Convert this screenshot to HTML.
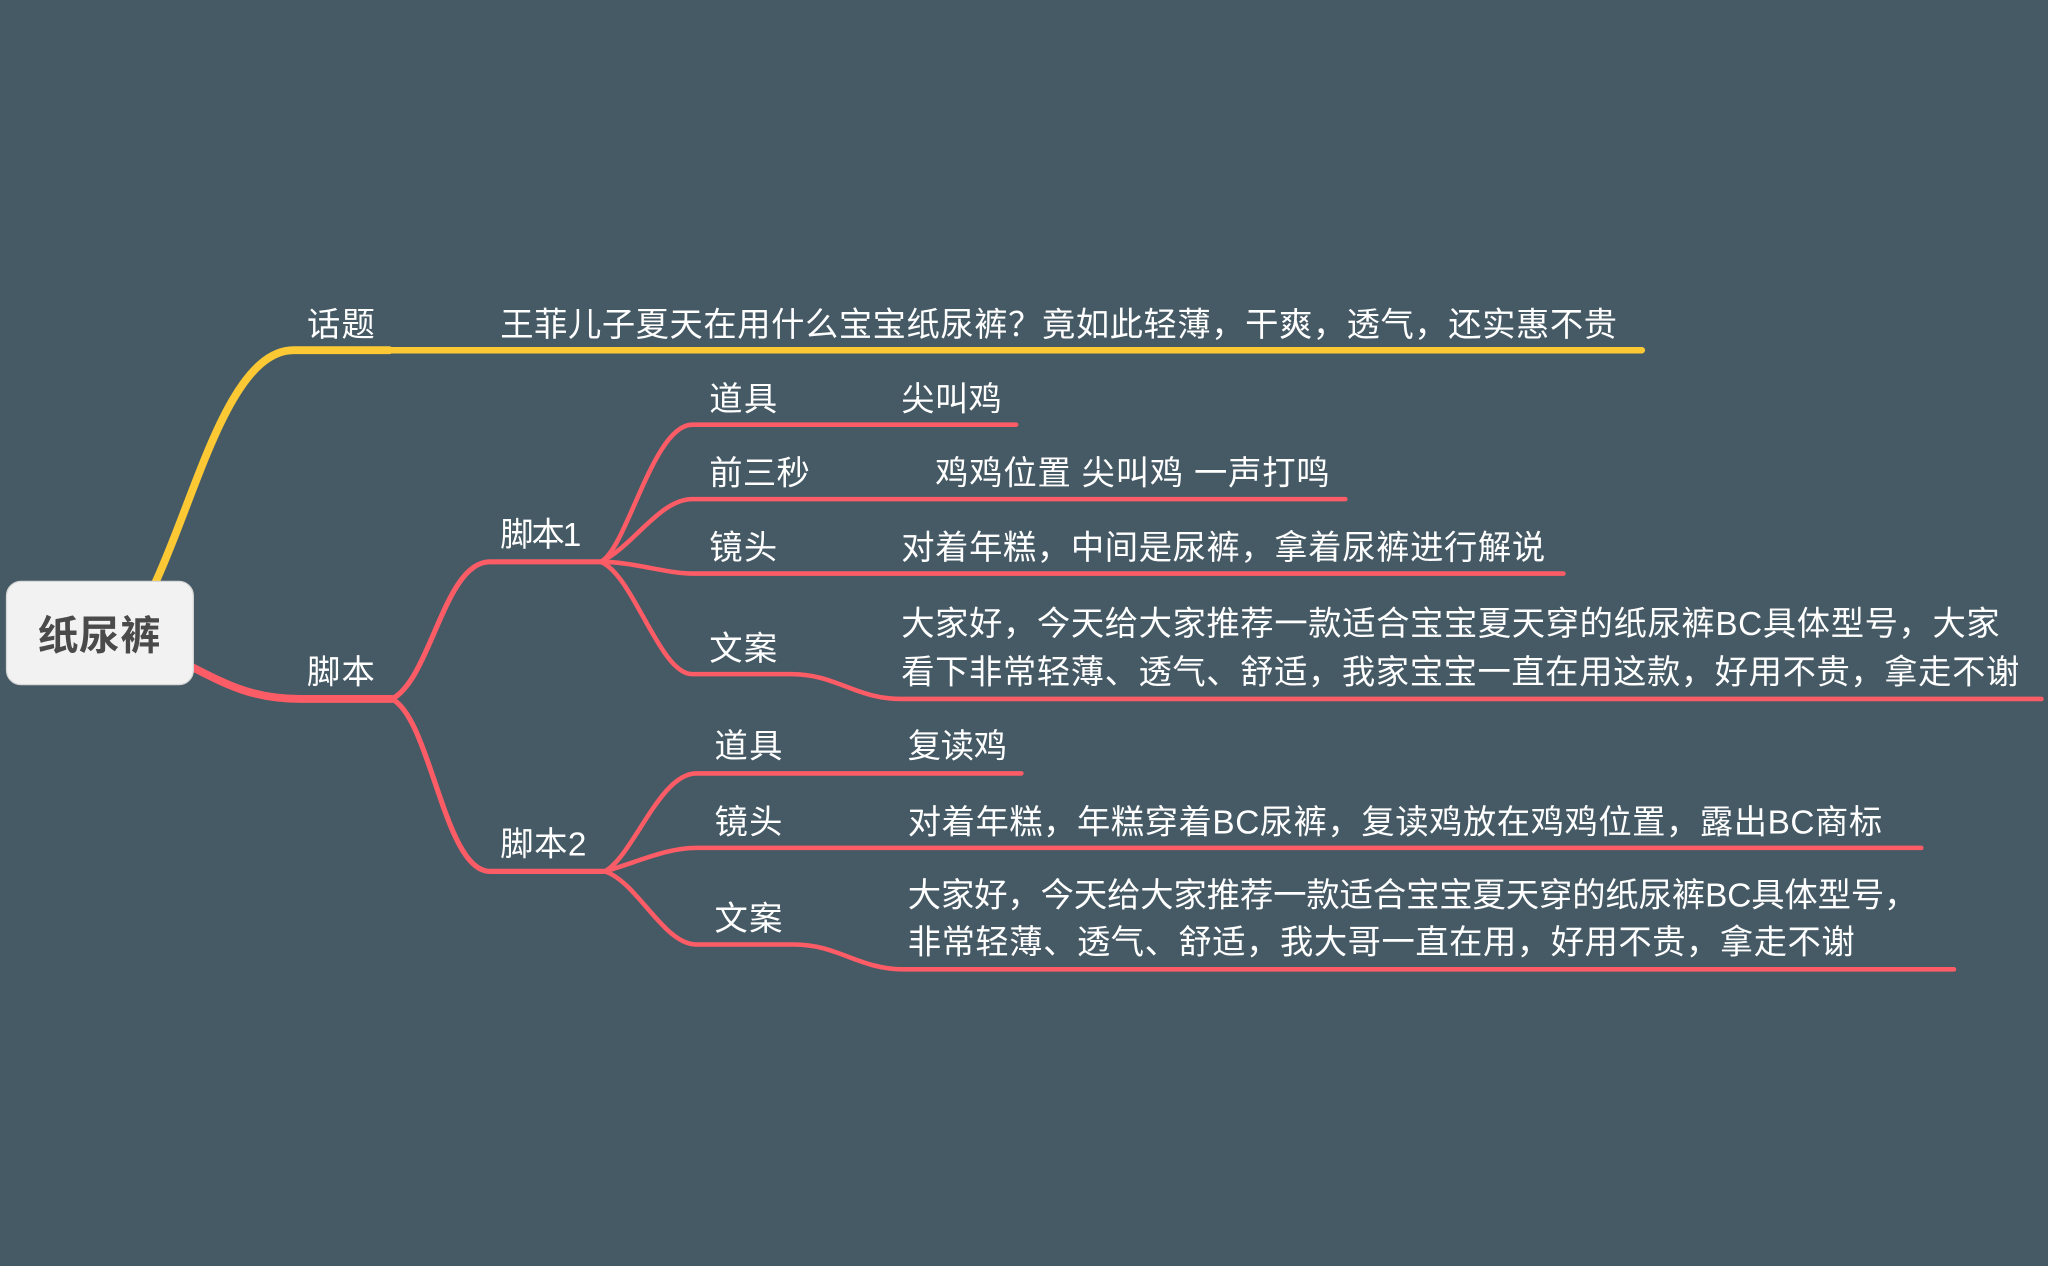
<!DOCTYPE html>
<html><head><meta charset="utf-8"><style>
html,body{margin:0;padding:0;background:#465a65;}
svg{display:block}
text{font-family:"Liberation Sans","Noto Sans CJK SC",sans-serif;fill:#fff;font-size:25.5px}
</style></head><body>
<svg width="2048" height="1266" viewBox="0 0 1568 969" xmlns="http://www.w3.org/2000/svg">
<rect width="1568" height="969" fill="#465a65"/>
<g fill="none" stroke-linecap="round">
<path d="M118 448 C150 380 175 268 225 268 L298 268" stroke="#fcc934" stroke-width="6"/>
<path d="M296 268 L1257 268" stroke="#fcc934" stroke-width="5"/>
<g stroke="#fb5c66">
<path d="M146 510 C175 525 195 535 230 535 L300 535" stroke-width="6"/>
<path d="M300 535 C330 520 340 430 375 430 L460 430" stroke-width="4"/>
<path d="M300 535 C330 550 340 667 375 667 L463 667" stroke-width="4"/>
<path d="M460 430 C480 420 500 325 530 325 L778 325" stroke-width="3.5"/>
<path d="M460 430 C485 418 505 382 530 382 L1030 382" stroke-width="3.5"/>
<path d="M460 430 C485 430 510 439 530 439 L1197 439" stroke-width="3.5"/>
<path d="M460 430 C485 440 505 516 530 516 L606 516 C640 516 655 535 690 535 L1563 535" stroke-width="3.5"/>
<path d="M463 667 C485 655 505 592 533 592 L782 592" stroke-width="3.5"/>
<path d="M463 667 C488 660 510 649 533 649 L1471 649" stroke-width="3.5"/>
<path d="M463 667 C488 675 508 723 533 723 L608 723 C642 723 657 742 692 742 L1496 742" stroke-width="3.5"/>
</g>
</g>
<rect x="5" y="445" width="143" height="79" rx="11" fill="#f2f2f2" stroke="#d8d8d8" stroke-width="1"/>
<text x="76" y="497" text-anchor="middle" textLength="94" style="fill:#4a4a4a;font-size:31px;font-weight:bold">纸尿裤</text>
<text x="235" y="257" textLength="52">话题</text>
<text x="383" y="257" textLength="855">王菲儿子夏天在用什么宝宝纸尿裤？竟如此轻薄，干爽，透气，还实惠不贵</text>
<text x="235" y="523" textLength="52">脚本</text>
<text x="383" y="418" textLength="62">脚本1</text>
<text x="383" y="655" textLength="66">脚本2</text>
<text x="543" y="314" textLength="52">道具</text><text x="690" y="314" textLength="77">尖叫鸡</text>
<text x="543" y="371" textLength="77">前三秒</text><text x="716" y="371" textLength="302">鸡鸡位置 尖叫鸡 一声打鸣</text>
<text x="543" y="428" textLength="52">镜头</text><text x="690" y="428" textLength="493">对着年糕，中间是尿裤，拿着尿裤进行解说</text>
<text x="543" y="505" textLength="52">文案</text>
<text x="690" y="486" textLength="841">大家好，今天给大家推荐一款适合宝宝夏天穿的纸尿裤BC具体型号，大家</text>
<text x="690" y="523" textLength="856">看下非常轻薄、透气、舒适，我家宝宝一直在用这款，好用不贵，拿走不谢</text>
<text x="547" y="580" textLength="52">道具</text><text x="695" y="580" textLength="76">复读鸡</text>
<text x="547" y="638" textLength="52">镜头</text><text x="695" y="638" textLength="746">对着年糕，年糕穿着BC尿裤，复读鸡放在鸡鸡位置，露出BC商标</text>
<text x="547" y="712" textLength="52">文案</text>
<text x="695" y="694" textLength="773">大家好，今天给大家推荐一款适合宝宝夏天穿的纸尿裤BC具体型号，</text>
<text x="695" y="730" textLength="725">非常轻薄、透气、舒适，我大哥一直在用，好用不贵，拿走不谢</text>
</svg>
</body></html>
